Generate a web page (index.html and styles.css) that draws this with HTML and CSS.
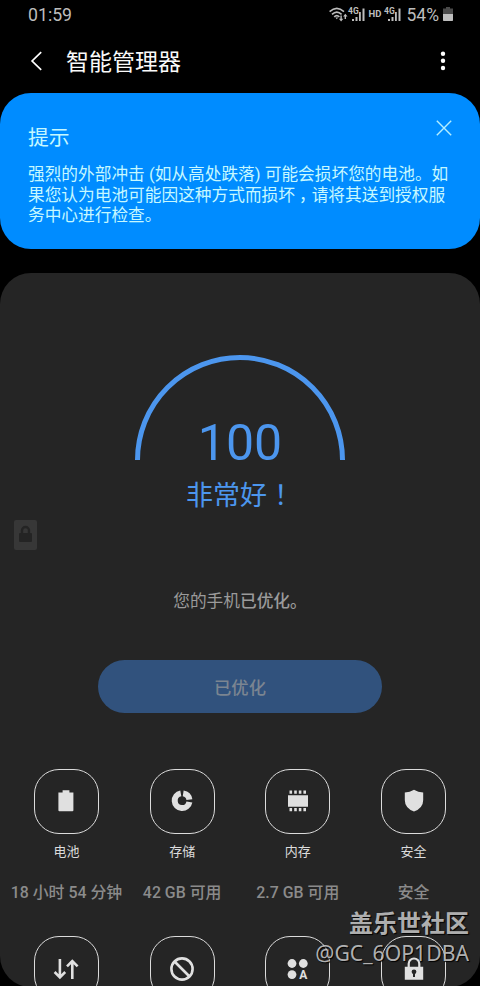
FILE: index.html
```html
<!DOCTYPE html>
<html lang="zh-CN">
<head>
<meta charset="utf-8">
<title>智能管理器</title>
<link rel="stylesheet" href="styles.css">
</head>
<body>
<div class="screen">
  <header class="statusbar">
    <span class="clock">01:59</span>
    <div class="status">
      <svg class="wifi" width="20" height="16" viewBox="0 0 20 16" fill="none" stroke="#bdbdbd" stroke-width="1.6">
        <path d="M.6 4.6Q7.8-2 15 4.6M3 7.4Q7.8 2.8 12.6 7.4M5.2 9.8Q7.8 7.3 10.4 9.8"/>
        <path fill="#bdbdbd" stroke="none" d="M6.4 10.6h2.8L7.8 12.3zM11.4 8.5h1.4v3.3h1.5l-2.2 2.7-2.2-2.7h1.5zM15.6 12V9.5h-1.5l2.2-2.7 2.2 2.7H17V12z"/>
      </svg>
      <svg class="signal" width="17" height="16" viewBox="0 0 17 16">
        <text x="-1" y="6.5" class="net">4G</text>
        <path fill="#bdbdbd" d="M3 12h2v2H3zM6.5 10h2v4h-2zM10 5h1.8v9H10zM13.5 1.5h2V14h-2z"/>
      </svg>
      <span class="hd">HD</span>
      <svg class="signal" width="17" height="16" viewBox="0 0 17 16">
        <text x="-1" y="6.5" class="net">4G</text>
        <path fill="#bdbdbd" d="M3 12h2v2H3zM6.5 10h2v4h-2zM10 5h1.8v9H10zM13.5 1.5h2V14h-2z"/>
      </svg>
      <span class="percent">54%</span>
      <svg class="cell" width="10" height="14" viewBox="0 0 10 14"><path fill="#4a4a4a" d="M3 0h4v1.6h3V7H0V1.6h3z"/><path fill="#bdbdbd" d="M0 7h10v6.3q0 .7-.7.7H.7Q0 14 0 13.3z"/></svg>
    </div>
  </header>

  <nav class="toolbar">
    <svg class="back" width="12" height="20" viewBox="0 0 12 20" fill="none" stroke="#fff" stroke-width="1.7"><path d="M11.2 1.2L2.1 10l9.1 8.8"/></svg>
    <h1 class="title">智能管理器</h1>
    <svg class="more" width="6" height="20" viewBox="0 0 6 20" fill="#fff"><circle cx="3" cy="2.7" r="2.2"/><circle cx="3" cy="9.8" r="2.2"/><circle cx="3" cy="17" r="2.2"/></svg>
  </nav>

  <section class="tip">
    <div class="tip-head">
      <h2 class="tip-title">提示</h2>
      <svg class="close" width="16" height="16" viewBox="0 0 16 16" stroke="#b5efff" stroke-width="1.4"><path d="M.8.8l14.4 14.4M15.2.8L.8 15.2"/></svg>
    </div>
    <p class="tip-text">强烈的外部冲击 (如从高处跌落) 可能会损坏您的电池。如<br>果您认为电池可能因这种方式而损坏<span class="comma">，</span>请将其送到授权服<br>务中心进行检查。</p>
  </section>

  <main class="card">
    <div class="gauge">
      <svg class="arc" width="210" height="105" viewBox="0 0 210 105" fill="none" stroke="#4c96ee" stroke-width="5"><path d="M2.5 105a102.5 102.5 0 0 1 205 0"/></svg>
      <div class="score">100</div>
    </div>
    <div class="rating">非常好<span class="mark">！</span></div>
    <p class="summary">您的手机<b>已优化。</b></p>
    <button class="optimize">已优化</button>

    <div class="grid">
      <div class="item">
        <div class="tile"><svg width="32" height="32" viewBox="0 0 32 32" fill="#e0e0e0"><path d="M12.6 5.3h6.8v2.2h4v17.7q0 1-1 1H9.4q-1 0-1-1V7.5h4.2z"/></svg></div>
        <div class="label">电池</div>
        <div class="value">18 小时 54 分钟</div>
      </div>
      <div class="item">
        <div class="tile"><svg width="32" height="32" viewBox="0 0 32 32" fill="none" stroke="#e0e0e0" stroke-width="6"><path d="M14.8 8.4A7.4 7.4 0 1 0 23.4 17"/><path d="M17.2 8.4A7.4 7.4 0 0 1 23.4 14.6"/></svg></div>
        <div class="label">存储</div>
        <div class="value">42 GB 可用</div>
      </div>
      <div class="item">
        <div class="tile"><svg width="32" height="32" viewBox="0 0 32 32" fill="#e0e0e0"><path d="M6 10.3h20v11.4H6zM7.5 5.5h2.6v3.2H7.5zM12.2 5.5h2.6v3.2h-2.6zM16.8 5.5h2.6v3.2h-2.6zM21.4 5.5H24v3.2h-2.6zM7.5 23h2.6v3.2H7.5zM12.2 23h2.6v3.2h-2.6zM16.8 23h2.6v3.2h-2.6zM21.4 23H24v3.2h-2.6z"/></svg></div>
        <div class="label">内存</div>
        <div class="value">2.7 GB 可用</div>
      </div>
      <div class="item">
        <div class="tile"><svg width="32" height="32" viewBox="0 0 32 32" fill="#e0e0e0"><path d="M16 4.7q4 2.6 9.2 2.8V15q0 8-9.2 11.6Q6.8 23 6.8 15V7.5Q12 7.3 16 4.7z"/></svg></div>
        <div class="label">安全</div>
        <div class="value">安全</div>
      </div>
      <div class="item">
        <div class="tile"><svg width="32" height="32" viewBox="0 0 32 32" fill="none" stroke="#e0e0e0" stroke-width="2.6"><path d="M9.9 6v18M4.6 19l5.3 5.3 5.3-5.3M22.3 26V8M17 13.3L22.3 8l5.3 5.3"/></svg></div>
      </div>
      <div class="item">
        <div class="tile"><svg width="32" height="32" viewBox="0 0 32 32" fill="none" stroke="#e0e0e0" stroke-width="2.6"><circle cx="16" cy="16" r="10.6"/><path d="M8.5 8.5l15 15"/></svg></div>
      </div>
      <div class="item">
        <div class="tile"><svg width="32" height="32" viewBox="0 0 32 32" fill="#e0e0e0"><circle cx="10" cy="10.5" r="4.4"/><circle cx="21.3" cy="10.5" r="4.4"/><circle cx="10" cy="21.6" r="4.4"/><text x="17.3" y="26.2" class="letter">A</text></svg></div>
      </div>
      <div class="item">
        <div class="tile"><svg width="32" height="32" viewBox="0 0 32 32"><path fill="none" stroke="#e0e0e0" stroke-width="2.2" d="M10.7 15v-4.2a5.3 5.3 0 0 1 10.6 0V15"/><path fill="#e0e0e0" d="M6.8 13.8h18.4v13H6.8z"/><circle cx="16" cy="18.8" r="2.4" fill="#252525"/><path fill="#252525" d="M15 19h2v5h-2z"/></svg></div>
      </div>
    </div>
  </main>

  <svg class="edge-lock" width="23" height="30" viewBox="0 0 23 30"><rect width="23" height="30" rx="2" fill="#373737"/><path fill="none" stroke="#242424" stroke-width="2.4" d="M8 14v-3.500a3.500 3.500 0 0 1 7 0V14"/><rect x="5" y="13" width="13" height="9" rx="1" fill="#242424"/></svg>
  <div class="watermark">
    <div class="forum">盖乐世社区</div>
    <div class="user">@GC_6OP1DBA</div>
  </div>
</div>
</body>
</html>
```

FILE: styles.css
```css
* { box-sizing: border-box; margin: 0; padding: 0; }

body {
  background: #000;
  font-family: Roboto, "Noto Sans CJK SC", sans-serif;
}

.screen {
  position: relative;
  width: 480px;
  height: 986px;
  overflow: hidden;
  background: #000;
}

.statusbar {
  display: flex;
  justify-content: space-between;
  height: 30px;
  padding: 0 28px;
  color: #bdbdbd;
  line-height: 30px;
}
.clock { font-size: 17.7px; }
.status { display: flex; align-items: center; margin-right: -1px; }
.wifi { margin-left: -1px; }
.signal { overflow: visible; }
.net { font: 700 8.5px Roboto, sans-serif; fill: #bdbdbd; }
.hd { font-size: 9.5px; font-weight: 700; width: 19px; text-align: center; line-height: 28px; padding-bottom: 2px; }
.percent { font-size: 17.5px; margin: 0 4px 0 5px; }
.cell { margin-top: -2px; }

.toolbar {
  display: flex;
  align-items: center;
  height: 63px;
  padding: 0 34px 0 30px;
}
.back, .more { margin-top: -1px; }
.title {
  flex: 1;
  margin: 2px 0 0 24px;
  color: #fafafa;
  font-size: 23px;
  font-weight: 400;
  line-height: 30px;
}

.tip {
  height: 156px;
  padding: 30px 28px 0;
  border-radius: 31px;
  background: #008cff;
  color: #c6f8ff;
}
.tip-head { display: flex; justify-content: space-between; align-items: flex-start; }
.tip-title { font-size: 20.8px; font-weight: 400; line-height: 30px; }
.close { margin: -3px 0 0; }
.tip-text {
  margin-top: 12px;
  font-size: 16.7px;
  line-height: 20.7px;
  white-space: nowrap;
}
.comma {
  display: inline-block;
  width: 16.7px;
  padding-left: 4px;
  font-feature-settings: "halt";
}

.card {
  display: flex;
  flex-direction: column;
  align-items: center;
  height: 714px;
  margin-top: 24px;
  padding-top: 82px;
  overflow: hidden;
  border-radius: 31px;
  background: #252525;
}
.gauge {
  display: grid;
  width: 210px;
  height: 120px;
}
.arc, .score { grid-area: 1 / 1; }
.score {
  align-self: end;
  margin-bottom: -13px;
  color: #4c96ee;
  font-size: 50px;
  line-height: 60px;
  text-align: center;
}
.rating {
  margin-top: 16px;
  color: #4c96ee;
  font-size: 27px;
  line-height: 40px;
}
.mark {
  display: inline-block;
  width: 27px;
  padding-left: 7px;
  font-feature-settings: "halt";
}
.summary {
  margin-top: 73px;
  color: #9b9b9b;
  font-size: 16.7px;
  line-height: 25px;
}
.summary b { font-weight: 500; }
.optimize {
  width: 284px;
  height: 53px;
  margin-top: 46px;
  border: 0;
  border-radius: 27px;
  background: #31527d;
  color: #7b8591;
  font: 500 17.3px/53px "Noto Sans CJK SC", sans-serif;
}

.grid {
  display: grid;
  grid-template-columns: repeat(4, 115.7px);
  grid-auto-rows: 167.5px;
  margin-top: 55.5px;
}
.item { display: flex; flex-direction: column; align-items: center; }
.tile {
  display: grid;
  place-items: center;
  flex: none;
  width: 65px;
  height: 65px;
  margin-bottom: 1px;
  border: 1.5px solid #dcdcdc;
  border-radius: 25px;
}
.label { margin-top: 7px; color: #dcdcdc; font-size: 13px; line-height: 20px; }
.value {
  margin-top: 19px;
  color: #8b8b8b;
  font-size: 15.9px;
  font-weight: 500;
  line-height: 24px;
  white-space: nowrap;
}
.letter { font: 700 12px Roboto, sans-serif; }

.edge-lock { position: absolute; left: 14px; top: 520px; }

.watermark {
  position: absolute;
  right: 11px;
  top: 904px;
  color: rgba(205, 205, 205, .86);
  text-align: right;
  text-shadow: 1px 1px 1px #000;
}
.forum { font: 700 24px/36px "Noto Sans CJK SC", sans-serif; }
.user { font: 400 21.2px/26px "Noto Sans", sans-serif; }
```
